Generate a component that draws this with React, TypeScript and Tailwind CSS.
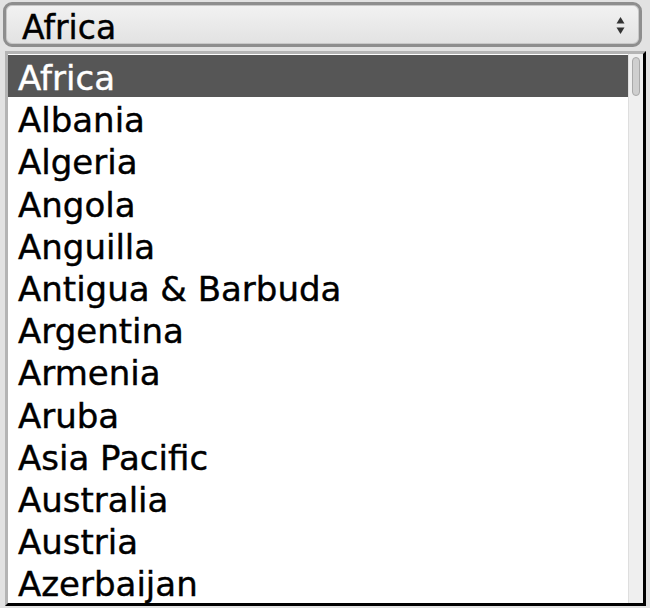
import React from 'react';

const countries = [
  'Africa',
  'Albania',
  'Algeria',
  'Angola',
  'Anguilla',
  'Antigua & Barbuda',
  'Argentina',
  'Armenia',
  'Aruba',
  'Asia Pacific',
  'Australia',
  'Austria',
  'Azerbaijan',
];

const font = { fontFamily: '"DejaVu Sans", "Liberation Sans", sans-serif' };

const App: React.FC = () => {
  const selected = 'Africa';

  return (
    <div className="w-[650px] h-[608px] bg-[#e2e2e2] pt-[2px] overflow-hidden" style={font}>
      {/* closed select */}
      <div className="ml-[3px] w-[639px] h-[45px] rounded-[9px] border-[3px] border-[#8e8e8e] bg-gradient-to-b from-[#f2f2f2] to-[#e2e2e2] flex items-center justify-between pl-[16px] pr-[14px] shadow-[inset_0_0_0_1px_#c8c8c8]">
        <span className="text-[33px] leading-none text-black pt-[5px] [-webkit-text-stroke:0.4px_black]">{selected}</span>
        <svg width="9" height="19" viewBox="0 0 9 19" className="text-[#333] mt-[2px]">
          <path d="M4.5 1 L8.5 7.5 L0.5 7.5 Z" fill="currentColor" />
          <path d="M0.5 11.5 L8.5 11.5 L4.5 18 Z" fill="currentColor" />
        </svg>
      </div>

      {/* open list */}
      <div className="mt-[4px] ml-[5px] w-[641px] h-[555px] border-t-[3px] border-l-[3px] border-t-[#b4b4b4] border-l-[#b4b4b4] border-r-[3px] border-b-[3px] border-r-black border-b-black bg-white flex overflow-hidden">
        <div className="flex-1 flex flex-col pt-[1px]">
          {countries.map((c) => (
            <div
              key={c}
              className={
                c === selected
                  ? 'h-[42.2px] shrink-0 pl-[10px] pt-[4px] bg-[#565656] text-white text-[34px] [-webkit-text-stroke:0.4px_white]'
                  : 'h-[42.2px] shrink-0 pl-[10px] pt-[4px] text-black text-[34px] [-webkit-text-stroke:0.4px_black]'
              }
            >
              <div className="h-[38px] leading-[38px]">{c}</div>
            </div>
          ))}
        </div>
        <div className="w-[15px] bg-[#efefef] border-l border-[#dedede] flex justify-center">
          <div className="mt-[3px] w-[8px] h-[39px] rounded-full bg-[#cfcfcf] border border-[#a9a9a9]" />
        </div>
      </div>
    </div>
  );
};

export default App;
